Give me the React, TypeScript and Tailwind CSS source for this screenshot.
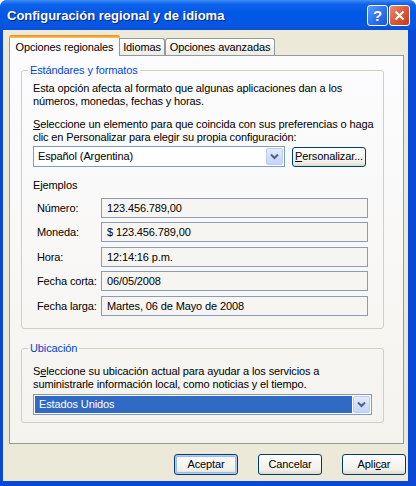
const examples = [
  { label: "Número:", value: "123.456.789,00", gap: "mt-0" },
  { label: "Moneda:", value: "$ 123.456.789,00", gap: "mt-[4px]" },
  { label: "Hora:", value: "12:14:16 p.m.", gap: "mt-[5px]" },
  { label: "Fecha corta:", value: "06/05/2008", gap: "mt-[4px]" },
  { label: "Fecha larga:", value: "Martes, 06 de Mayo de 2008", gap: "mt-[5px]" },
];

function Chevron() {
  return (
    <svg width="9" height="7" viewBox="0 0 9 7">
      <path d="M1 1.5 L4.5 5 L8 1.5" fill="none" stroke="#4d6185" strokeWidth="2" />
    </svg>
  );
}

function ComboArrow() {
  return (
    <div className="w-[17px] h-full flex items-center justify-center rounded-[2px] border border-[#bccdf5] bg-[linear-gradient(to_bottom,#e3ebfd,#c2d4fa)]">
      <Chevron />
    </div>
  );
}

function XPButton({ children, isDefault }: { children: React.ReactNode; isDefault?: boolean }) {
  return (
    <button
      className={`w-[64px] h-[21px] rounded-[3px] border border-[#003c74] bg-[linear-gradient(to_bottom,#ffffff,#f0efe8_80%,#dcd9cc)] text-[11px] leading-none ${
        isDefault ? "shadow-[inset_0_0_0_1px_#b5cbf2,inset_0_0_0_2px_#a0baeb]" : ""
      }`}
    >
      {children}
    </button>
  );
}

export default function App() {
  return (
    <div className="w-[416px] h-[486px] flex flex-col bg-[#0a48d6] rounded-t-[7px] overflow-hidden text-[11px] leading-[13px] tracking-[-0.12px] text-black font-['Liberation_Sans',Arial,sans-serif]">
      {/* title bar */}
      <div className="h-[30px] flex items-center pl-[7px] pr-[6px] bg-[linear-gradient(to_bottom,#3d8df7_0%,#0d62ea_14%,#0058e6_45%,#0656e2_85%,#0a4fd6_100%)]">
        <span className="flex-1 text-white font-bold text-[13px] tracking-normal [text-shadow:1px_1px_0_#0c2080]">
          Configuración regional y de idioma
        </span>
        <div className="flex gap-[1px] mt-[1px]">
          <div className="w-[21px] h-[21px] rounded-[3px] border border-white bg-[linear-gradient(135deg,#5a9cfa,#2a6cf0_60%,#1d58dc)] flex items-center justify-center text-white font-bold text-[15px]">
            ?
          </div>
          <div className="w-[21px] h-[21px] rounded-[3px] border border-white bg-[linear-gradient(135deg,#ee8d6c,#dd5430_55%,#c53b18)] flex items-center justify-center">
            <svg width="11" height="11" viewBox="0 0 11 11">
              <path d="M1.5 1.5 L9.5 9.5 M9.5 1.5 L1.5 9.5" stroke="white" strokeWidth="2.2" />
            </svg>
          </div>
        </div>
      </div>

      {/* client */}
      <div className="flex-1 flex pl-[3px] pr-[8px] pb-[5px]">
        <div className="flex-1 bg-[#ece9d8] flex flex-col pt-[5px] pl-[6px] pr-[4px]">
          {/* tabs */}
          <div className="flex items-end h-[20px]">
            <div className="relative z-10 w-[111px] h-[21px] -mb-px flex flex-col bg-[#fcfcfe] border-x border-[#919b9c] rounded-t-[3px]">
              <div className="h-[3px] -mx-px rounded-t-[3px] bg-[linear-gradient(to_bottom,#e68b2c,#ffc73c)]" />
              <div className="flex-1 flex items-center justify-center">Opciones regionales</div>
            </div>
            <div className="w-[45px] h-[17px] flex items-center justify-center border-t border-r border-[#919b9c] rounded-tr-[3px] bg-[linear-gradient(to_bottom,#ffffff,#ecebe6)]">
              Idiomas
            </div>
            <div className="w-[110px] h-[17px] flex items-center justify-center border-t border-x border-[#919b9c] rounded-t-[3px] bg-[linear-gradient(to_bottom,#ffffff,#ecebe6)]">
              Opciones avanzadas
            </div>
          </div>

          {/* panel */}
          <div className="h-[389px] border border-[#919b9c] bg-[linear-gradient(to_bottom,#fcfcfe,#f4f3ee)] pl-[11px]">
            <fieldset className="w-[363px] mt-[8px] border border-[#d0d0bf] rounded-[3px] pl-[11px] pb-[12px]">
              <legend className="-ml-[5px] px-[2px] text-[#0046d5]">Estándares y formatos</legend>
              <p className="mt-[5px]">
                Esta opción afecta al formato que algunas aplicaciones dan a los
                <br />
                números, monedas, fechas y horas.
              </p>
              <p className="mt-[10px]">
                <u>S</u>eleccione un elemento para que coincida con sus preferencias o haga
                <br />
                clic en Personalizar para elegir su propia configuración:
              </p>
              <div className="flex items-center gap-[7px] mt-[2px]">
                <div className="w-[252px] h-[21px] flex border border-[#7f9db9] bg-white p-px">
                  <span className="flex-1 pl-[3px] flex items-center">Español (Argentina)</span>
                  <ComboArrow />
                </div>
                <button className="w-[74px] h-[20px] rounded-[3px] border border-[#003c74] bg-[linear-gradient(to_bottom,#ffffff,#f0efe8_80%,#dcd9cc)] text-[11px] leading-none">
                  <u>P</u>ersonalizar...
                </button>
              </div>
              <div className="mt-[12px]">Ejemplos</div>
              <div className="flex flex-col mt-[6px]">
                {examples.map((row) => (
                  <div key={row.label} className={`flex items-center ${row.gap}`}>
                    <span className="w-[68px] shrink-0 pl-[4px] whitespace-nowrap">{row.label}</span>
                    <div className="w-[267px] shrink-0 h-[20px] border border-[#8c9cb5] bg-[#f6f5f1] flex items-center pl-[5px]">
                      {row.value}
                    </div>
                  </div>
                ))}
              </div>
            </fieldset>

            <fieldset className="w-[363px] mt-[13px] border border-[#d0d0bf] rounded-[3px] pl-[11px] pb-[7px]">
              <legend className="-ml-[5px] px-[2px] text-[#0046d5]">Ubicación</legend>
              <p className="mt-[10px]">
                S<u>e</u>leccione su ubicación actual para ayudar a los servicios a
                <br />
                suministrarle información local, como noticias y el tiempo.
              </p>
              <div className="w-[339px] h-[21px] mt-[3px] flex border border-[#7f9db9] bg-white p-px">
                <span className="flex-1 mr-px pl-[4px] flex items-center bg-[#316ac5] text-white">Estados Unidos</span>
                <ComboArrow />
              </div>
            </fieldset>
          </div>

          {/* buttons */}
          <div className="flex justify-end gap-[20px] mt-[10px] -mr-[2px]">
            <XPButton isDefault>Aceptar</XPButton>
            <XPButton>Cancelar</XPButton>
            <XPButton>
              Apli<u>c</u>ar
            </XPButton>
          </div>
        </div>
      </div>
    </div>
  );
}
